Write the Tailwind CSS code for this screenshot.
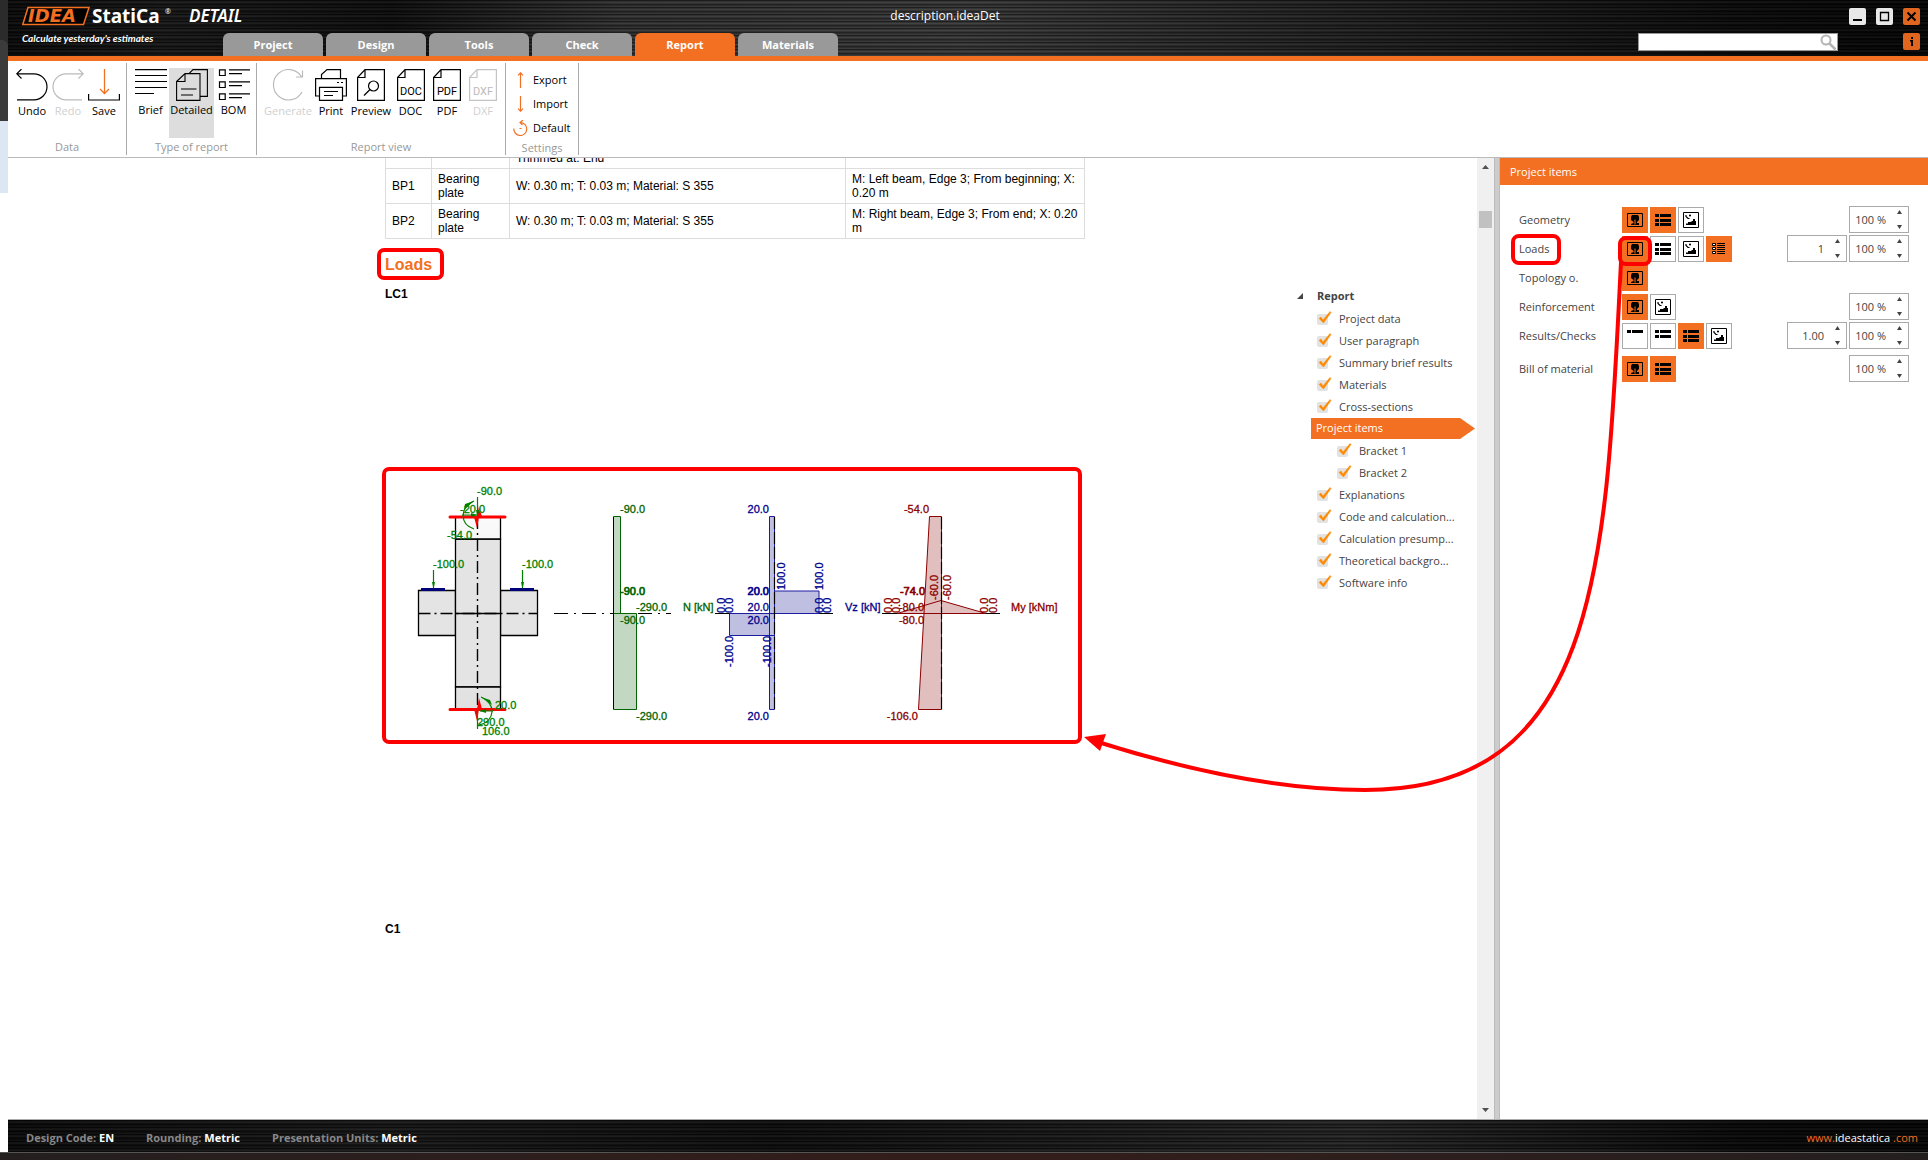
<!DOCTYPE html>
<html lang="en">
<head>
    <meta charset="UTF-8">
    <meta name="viewport" content="width=device-width, initial-scale=1.0">
    <title>description.ideaDet</title>
    <script src="https://cdn.jsdelivr.net/npm/@tailwindcss/browser@4"></script>
</head>
<body class="relative flex h-screen flex-col overflow-hidden bg-white font-['Open_Sans','Noto_Sans',sans-serif] text-[11px] leading-4 text-[#444]">

    <!-- icon sprites -->
    <svg class="hidden">
        <symbol id="i-figure" viewBox="0 0 16 16">
            <path d="M.5 1.500h15v13H.5z" fill="none" stroke="#000"/>
            <path d="M5 3h6l1 2v3l-2 2v1h2v2H4v-1l2.500-1v-1L4 8V5z" fill="#000"/>
            <path d="M7.500 7.500h1v5h-1z" fill="#f36f21"/>
        </symbol>
        <symbol id="i-list" viewBox="0 0 16 16">
            <path d="M0 2h4v3H0zM5 2h11v3H5zM0 7h4v3H0zM5 7h11v3H5zM0 11h4v3H0zM5 11h11v3H5z" fill="#000"/>
        </symbol>
        <symbol id="i-list2" viewBox="0 0 16 16">
            <path d="M0 2h4v3H0zM5 2h11v3H5zM0 7h4v3H0zM5 7h11v3H5z" fill="#000"/>
        </symbol>
        <symbol id="i-list1" viewBox="0 0 16 16">
            <path d="M0 2h4v3H0zM5 2h11v3H5z" fill="#000"/>
        </symbol>
        <symbol id="i-details" viewBox="0 0 16 16">
            <path d="M1.500 2.500h3v2h-3zM1.500 6.500h3v2h-3zM1.500 10.500h3v2h-3z" fill="#fff" stroke="#000"/>
            <path d="M6 2.500h8M6 4.500h8M6 6.500h8M6 8.500h8M6 10.500h8M6 12.500h8" stroke="#000"/>
        </symbol>
        <symbol id="i-image" viewBox="0 0 16 16">
            <path d="M.5.500h15v15H.5z" fill="#fff" stroke="#000"/>
            <path d="M3 3v1.500L5 6.500h1.500M7 2.500v2M6 3.500h2" stroke="#000" stroke-width="1.200" fill="none"/>
            <path d="M3 13v-1.500h2V10h3l1-1h1V7h2v2h1v4z" fill="#000"/>
        </symbol>
        <symbol id="i-check" viewBox="0 0 14 13">
            <path d="M1 7.500 3 6l2 3L12 .5l1 1L5.500 12z" fill="#ff8a00" stroke="#ff8a00" stroke-width=".5"/>
        </symbol>
    </svg>

    <div class="flex min-h-0 flex-1">
        <!-- edge of the window behind -->
        <div class="w-2 shrink-0">
            <div class="h-[121px] bg-[#2b2b2b] pt-10">
                <div class="h-[81px] rounded-tr-md bg-[#3b3b3b]"></div>
            </div>
            <div class="h-[72px] bg-[#dde6f3]"></div>
        </div>

        <div class="flex min-w-0 flex-1 flex-col">
            <header class="h-[61px] shrink-0 border-b-5 border-[#f36f21] bg-[repeating-linear-gradient(180deg,rgba(0,0,0,.55)_0px,rgba(0,0,0,.55)_1px,rgba(90,90,90,.25)_2px,rgba(0,0,0,.1)_3px,rgba(0,0,0,.6)_5px,rgba(60,60,60,.2)_6px,rgba(0,0,0,.2)_7px),linear-gradient(90deg,#0c0c0c_0%,#1c1c1c_8%,#101010_20%,#3c3c3c_32%,#444_50%,#2e2e2e_65%,#0c0c0c_90%,#050505_100%)] text-white">
                <div class="flex h-[33px]">
                    <div class="flex w-[215px] pl-3.5">
                        <svg class="h-8 w-[230px] shrink-0" viewBox="0 0 230 32">
                            <path d="M6 7.500H67L61.500 24.500H.800z" fill="#000" stroke="#f36f21" stroke-width="1.500"/>
                            <text x="6" y="22" font-family="DejaVu Sans" font-style="italic" font-weight="700" font-size="18" fill="#f36f21">IDEA</text>
                            <text x="70" y="23" font-family="Noto Sans" font-weight="700" font-size="19" fill="#fff">StatiCa</text>
                            <text x="143" y="14" font-family="Noto Sans" font-size="7" fill="#fff">®</text>
                            <text x="167" y="22" font-family="Noto Sans" font-style="italic" font-weight="600" font-size="17" fill="#fff">DETAIL</text>
                        </svg>
                    </div>
                    <div class="flex-1 pt-2 text-center text-xs">description.ideaDet</div>
                    <div class="flex w-[261px] justify-end gap-2.5 pt-2 pr-2">
                        <button class="size-[17px] rounded-xs bg-[#e8e8e8]" aria-label="Minimize"><svg viewBox="0 0 17 17"><path d="M4 12h9" stroke="#000" stroke-width="2"/></svg></button>
                        <button class="size-[17px] rounded-xs bg-[#e8e8e8]" aria-label="Maximize"><svg viewBox="0 0 17 17"><path d="M4.500 4.500h8v8h-8z" fill="none" stroke="#000" stroke-width="1.300"/></svg></button>
                        <button class="size-[17px] rounded-xs bg-[#e0661f]" aria-label="Close"><svg viewBox="0 0 17 17"><path d="m4.500 4.500 8 8m0-8-8 8" stroke="#000" stroke-width="2"/></svg></button>
                    </div>
                </div>
                <div class="flex h-[23px] items-start">
                    <div class="w-[215px] pl-3.5 font-['Lato',sans-serif] text-[10px] leading-[11px] font-bold italic">Calculate yesterday's estimates</div>
                    <nav class="flex gap-[3px] text-[11px] font-bold">
                        <button class="h-[23px] w-[100px] rounded-t-md bg-[#999]">Project</button>
                        <button class="h-[23px] w-[100px] rounded-t-md bg-[#999]">Design</button>
                        <button class="h-[23px] w-[100px] rounded-t-md bg-[#999]">Tools</button>
                        <button class="h-[23px] w-[100px] rounded-t-md bg-[#999]">Check</button>
                        <button class="h-[23px] w-[100px] rounded-t-md bg-[#f36f21]">Report</button>
                        <button class="h-[23px] w-[100px] rounded-t-md bg-[#999]">Materials</button>
                    </nav>
                    <div class="mr-[65px] ml-auto flex h-[18px] w-[200px] border border-[#999] bg-white">
                        <input type="search" aria-label="Search" class="min-w-0 flex-1 px-1 text-black outline-none">
                        <svg class="size-[17px]" viewBox="0 0 17 17" fill="none" stroke="#b5b5b5" stroke-width="2"><circle cx="6" cy="6" r="4.500"/><path d="m9.500 9.500 6 6" stroke-width="2.500"/></svg>
                    </div>
                    <button class="mr-2 size-[17px] rounded-xs bg-[#e0661f]" aria-label="Info"><svg viewBox="0 0 17 17"><path d="M8 4h2v2H8zM8 7h2v6H8zM7 7h2v1.500H7z"/></svg></button>
                </div>
            </header>

            <!-- ribbon -->
            <div class="flex h-[97px] shrink-0 border-b border-[#bbb] pt-0.5 pb-0.5 text-black">
                <section class="flex w-[119px] flex-col border-r border-[#aaa] pt-[5px]">
                    <div class="flex flex-1 items-start pl-1.5">
                        <button class="flex w-9 flex-col items-center gap-0.5 pt-px whitespace-nowrap">
                            <svg class="size-8" viewBox="0 0 32 32" fill="none" stroke="#000" stroke-width="1.200"><path d="M5.500 0 .8 4.800l4.700 4.700M1 4.800h17a13 13 0 0 1 0 26H1"/></svg>
                            Undo
                        </button>
                        <button class="flex w-9 flex-col items-center gap-0.5 pt-px whitespace-nowrap text-[#d0d0d0]">
                            <svg class="size-8" viewBox="0 0 32 32" fill="none" stroke="#bbb" stroke-width="1.200"><path d="m26.500 0 4.700 4.800-4.700 4.700M31 4.800H14a13 13 0 0 0 0 26h16"/></svg>
                            Redo
                        </button>
                        <button class="flex w-9 flex-col items-center gap-0.5 pt-px whitespace-nowrap">
                            <svg class="size-8" viewBox="0 0 32 32" fill="none" stroke="#000"><path d="M.6 25v6h30.800v-6" stroke-width="1.200"/><path d="M16.500 0v24M12 20l4.500 4.500L21 20" stroke="#f36f21" stroke-width="1.300"/></svg>
                            Save
                        </button>
                    </div>
                    <div class="h-4 text-center text-[#999]">Data</div>
                </section>
                <section class="flex w-[130px] flex-col border-r border-[#aaa] pt-[5px]">
                    <div class="flex flex-1 items-start pl-[5px]">
                        <button class="flex w-[37px] flex-col items-center gap-px pt-px whitespace-nowrap">
                            <svg class="size-8" viewBox="0 0 32 32" stroke="#000" stroke-width="1.200"><path d="M0 .6h32M0 6.500h32M0 12.500h32M0 18.500h32M0 24.500h19"/></svg>
                            Brief
                        </button>
                        <button class="flex h-[70px] w-[45px] flex-col items-center gap-px bg-[#ddd] pt-px whitespace-nowrap">
                            <svg class="size-8" viewBox="0 0 32 32" fill="none" stroke="#000" stroke-width="1.100"><path d="M.6 12.500 9 4.600h15v26.800H.6zM.6 12.500H9V4.600M13 4.600 17 .6h14.400v26.800H24M5 20h15.500M5 26h12"/></svg>
                            Detailed
                        </button>
                        <button class="flex w-[39px] flex-col items-center gap-px pt-px whitespace-nowrap">
                            <svg class="size-8" viewBox="0 0 32 32" fill="none" stroke="#000" stroke-width="1.200"><path d="M1.500.800h5.700v5.700H1.500zM1.500 12.800h5.700v5.700H1.500zM1.500 24.800h5.700v5.700H1.500zM11 .8h21M11 4.700h13M11 12.800h21M11 16.700h13M11 24.800h21M11 28.700h13"/></svg>
                            BOM
                        </button>
                    </div>
                    <div class="h-4 text-center text-[#999]">Type of report</div>
                </section>
                <section class="flex w-[249px] flex-col border-r border-[#aaa] pt-[5px]">
                    <div class="flex flex-1 items-start pl-[7px]">
                        <button class="flex w-12 flex-col items-center gap-0.5 pt-px whitespace-nowrap text-[#d0d0d0]">
                            <svg class="size-8" viewBox="0 0 32 32" fill="none" stroke="#bbb" stroke-width="1.200"><path d="M30 23A15.200 15.200 0 1 1 30 8.500M30.500 1.500V8H24"/></svg>
                            Generate
                        </button>
                        <button class="flex w-[38px] flex-col items-center gap-0.5 pt-px whitespace-nowrap">
                            <svg class="size-8" viewBox="0 0 32 32" fill="none" stroke="#000" stroke-width="1.200"><path d="M6.500 9V5.500L12 .6h13.500V9M4 27H.6V9.600h30.800V27H28M22 13.500h2M26 13.500h2"/><path d="M4.500 31.400v-13h23v13zM9 22.500h14M9 26.500h9"/></svg>
                            Print
                        </button>
                        <button class="flex w-[42px] flex-col items-center gap-0.5 pt-px whitespace-nowrap">
                            <svg class="size-8" viewBox="0 0 32 32" fill="none" stroke="#000" stroke-width="1.200"><path d="M2.600 8.500 10 .6h19.400v30.800H2.600zM2.600 8.500H10V.6"/><circle cx="18.500" cy="17" r="5"/><path d="m15 20.500-6 6"/></svg>
                            Preview
                        </button>
                        <button class="flex w-[37px] flex-col items-center gap-0.5 pt-px whitespace-nowrap">
                            <svg class="size-8" viewBox="0 0 32 32" fill="none" stroke="#000" stroke-width="1.200"><path d="M2.600 8.500 10 .6h19.400v30.800H2.600zM2.600 8.500H10V.6"/><text x="16" y="26" text-anchor="middle" font-family="Roboto" font-size="11" fill="#000" stroke="none">DOC</text></svg>
                            DOC
                        </button>
                        <button class="flex w-9 flex-col items-center gap-0.5 pt-px whitespace-nowrap">
                            <svg class="size-8" viewBox="0 0 32 32" fill="none" stroke="#000" stroke-width="1.200"><path d="M2.600 8.500 10 .6h19.400v30.800H2.600zM2.600 8.500H10V.6"/><text x="16" y="26" text-anchor="middle" font-family="Roboto" font-size="11" fill="#000" stroke="none">PDF</text></svg>
                            PDF
                        </button>
                        <button class="flex w-9 flex-col items-center gap-0.5 pt-px whitespace-nowrap text-[#d0d0d0]">
                            <svg class="size-8" viewBox="0 0 32 32" fill="none" stroke="#c4c4c4" stroke-width="1.200"><path d="M2.600 8.500 10 .6h19.400v30.800H2.600zM2.600 8.500H10V.6"/><text x="16" y="26" text-anchor="middle" font-family="Roboto" font-size="11" fill="#bbb" stroke="none">DXF</text></svg>
                            DXF
                        </button>
                    </div>
                    <div class="h-4 text-center text-[#999]">Report view</div>
                </section>
                <section class="flex w-[73px] flex-col border-r border-[#aaa] pt-[5px]">
                    <div class="flex flex-1 flex-col pl-[7px]">
                        <button class="flex h-6 items-center gap-1">
                            <svg class="size-4" viewBox="0 0 16 16" fill="none" stroke="#f36f21" stroke-width="1.200"><path d="M7.500 16V.8M5 3.300 7.500.800 10 3.300"/></svg>
                            Export
                        </button>
                        <button class="flex h-6 items-center gap-1">
                            <svg class="size-4" viewBox="0 0 16 16" fill="none" stroke="#f36f21" stroke-width="1.200"><path d="M7.500 0v15.200M5 12.700l2.500 2.500 2.500-2.500"/></svg>
                            Import
                        </button>
                        <button class="flex h-6 items-center gap-1">
                            <svg class="size-4" viewBox="0 0 16 16" fill="none" stroke="#f36f21" stroke-width="1.200"><path d="M.8 8.500A6.500 6.500 0 1 0 7.500 2.500M10 0 7 2.500 9.500 5M6.500 8.500h2"/></svg>
                            Default
                        </button>
                    </div>
                    <div class="h-4 text-center text-[#999]">Settings</div>
                </section>
            </div>

            <main class="flex min-h-0 flex-1">
                <!-- report document -->
                <article class="min-w-0 flex-1 overflow-hidden pl-[377px] font-['Liberation_Sans',sans-serif] text-xs leading-[14px] text-black">
                    <table class="-mt-[25px] w-[700px] table-fixed border-collapse">
                        <colgroup><col class="w-[46px]"><col class="w-[78px]"><col class="w-[336px]"><col></colgroup>
                        <tbody>
                            <tr class="h-[35px]">
                                <td class="border border-[#ddd]"></td>
                                <td class="border border-[#ddd]"></td>
                                <td class="border border-[#ddd] px-1.5 pb-[3px] align-bottom">Trimmed at: End</td>
                                <td class="border border-[#ddd]"></td>
                            </tr>
                            <tr class="h-[35px]">
                                <td class="border border-[#ddd] px-1.5">BP1</td>
                                <td class="border border-[#ddd] px-1.5">Bearing<br>plate</td>
                                <td class="border border-[#ddd] px-1.5">W: 0.30 m; T: 0.03 m; Material: S 355</td>
                                <td class="border border-[#ddd] px-1.5">M: Left beam, Edge 3; From beginning; X: 0.20 m</td>
                            </tr>
                            <tr class="h-[35px]">
                                <td class="border border-[#ddd] px-1.5">BP2</td>
                                <td class="border border-[#ddd] px-1.5">Bearing<br>plate</td>
                                <td class="border border-[#ddd] px-1.5">W: 0.30 m; T: 0.03 m; Material: S 355</td>
                                <td class="border border-[#ddd] px-1.5">M: Right beam, Edge 3; From end; X: 0.20<br>m</td>
                            </tr>
                        </tbody>
                    </table>
                    <h2 class="mt-4 text-base leading-5 font-bold text-[#f36f21]">Loads</h2>
                    <h3 class="mt-3 font-bold">LC1</h3>

                    <!-- load scheme and N / Vz / My diagrams -->
                    <svg class="mt-[166px] h-[277px] w-[700px] overflow-visible" viewBox="385 467 700 277" font-family="Liberation Sans" font-size="11">
                        <defs>
                            <linearGradient id="top" x2="0" y2="1"><stop stop-color="#fafafa"/><stop offset="1" stop-color="#e0e0e0"/></linearGradient>
                        </defs>
                        <g fill="#e4e4e4" stroke="#000" stroke-width="1.300">
                            <path d="M418.500 590.500h37v45h-37zM500.500 590.500h37v45h-37z"/>
                            <path d="M455.500 539h45v148h-45z"/>
                            <path d="M455.500 517h45v22h-45zM455.500 687h45v22h-45z" fill="url(#top)"/>
                            <path d="M455.500 613.500h45"/>
                        </g>
                        <path d="M418.500 613.500h119M477.500 517v192" stroke="#000" stroke-width="1.400" stroke-dasharray="12 4 2 4" fill="none"/>
                        <path d="M421 588h24v3h-24zM510 588h24v3h-24z" fill="#000078"/>
                        <path d="M450 517h55M450 709.500h55" stroke="#f00" stroke-width="3" stroke-linecap="round"/>
                        <path d="m479 506 3 11h-3l-2 11-3-11h3zM479 698l3 11h-3l-2 12-3-12h3z" fill="#f00"/>
                        <g fill="none" stroke="#008000" stroke-width="1.200">
                            <path d="M477.500 497v20M433.500 570v18M522.500 570v18M477.500 709v20M462 515h15M480 711h13"/>
                            <path d="M474 501c-14 6-15 23 0 28M481 697c15 6 15 24-2 28"/>
                        </g>
                        <path d="m474 501-9 3-1 6zM481 697l9 3 2 5zM432 582h3l-1.500 7zM521 582h3l-1.500 7zM471 513l6 2-6 2zM476 510h3l-1.500 7zM486 709l-6 2 6 2z" fill="#008000"/>
                        <g fill="#008000" stroke="#008000" stroke-width=".3">
                            <text x="477" y="495">-90.0</text>
                            <text x="460" y="513">-20.0</text>
                            <text x="447" y="539">-54.0</text>
                            <text x="433" y="568">-100.0</text>
                            <text x="522" y="568">-100.0</text>
                            <text x="495" y="709">20.0</text>
                            <text x="477" y="726">290.0</text>
                            <text x="482" y="735">106.0</text>
                        </g>

                        <!-- N -->
                        <path d="M554 613.500h117" stroke="#000" stroke-dasharray="14 6 2 6"/>
                        <path d="M613.500 516.500h7v97h-7zM613.500 613.500h23v96h-23z" fill="#c3d8c3" stroke="#006400"/>
                        <path d="M613.500 517v192" stroke="#000"/>
                        <g fill="#006400" stroke="#006400" stroke-width=".3">
                            <text x="620" y="513">-90.0</text>
                            <text x="620" y="595" stroke-width=".7">-90.0</text>
                            <text x="636" y="611">-290.0</text>
                            <text x="620" y="624">-90.0</text>
                            <text x="636" y="720">-290.0</text>
                            <text x="683" y="611">N [kN]</text>
                        </g>

                        <!-- Vz -->
                        <path d="M715 613.500h118" stroke="#000" stroke-width="1.200"/>
                        <path d="M729.500 613.500h45v22h-45zM774.500 591h44.500v22.500h-44.500zM769.500 516.500h5v193h-5z" fill="#00008b" fill-opacity=".25" stroke="#1c1ca0"/>
                        <path d="M774.500 517v192" stroke="#000" stroke-width="1.200" stroke-dasharray="12 3"/>
                        <g fill="#00008b" stroke="#00008b" stroke-width=".3">
                            <g text-anchor="end">
                                <text x="769" y="513">20.0</text>
                                <text x="769" y="595" stroke-width=".7">20.0</text>
                                <text x="769" y="611">20.0</text>
                                <text x="769" y="624">20.0</text>
                                <text x="769" y="720">20.0</text>
                            </g>
                            <text transform="translate(785 590) rotate(-90)">100.0</text>
                            <text transform="translate(823 590) rotate(-90)">100.0</text>
                            <text transform="translate(725 613) rotate(-90)">0.0</text>
                            <text transform="translate(733 613) rotate(-90)">0.0</text>
                            <text transform="translate(823 613) rotate(-90)">0.0</text>
                            <text transform="translate(831 613) rotate(-90)">0.0</text>
                            <text transform="translate(733 667) rotate(-90)">-100.0</text>
                            <text transform="translate(771 667) rotate(-90)">-100.0</text>
                            <text x="845" y="611">Vz [kN]</text>
                        </g>

                        <!-- My -->
                        <path d="M882 613.500h118" stroke="#000" stroke-width="1.200"/>
                        <path d="M929.500 516.500h12v193H918.500zM897 613.500l44-13 45 13z" fill="#8b0000" fill-opacity=".25" stroke="#8b0000"/>
                        <path d="M941.500 517v192" stroke="#000" stroke-width="1.200" stroke-dasharray="12 3"/>
                        <g fill="#8b0000" stroke="#8b0000" stroke-width=".3">
                            <g text-anchor="end">
                                <text x="929" y="513">-54.0</text>
                                <text x="925" y="595" stroke-width=".7">-74.0</text>
                                <text x="924" y="611">-80.0</text>
                                <text x="924" y="624">-80.0</text>
                                <text x="918" y="720">-106.0</text>
                            </g>
                            <text transform="translate(938 600) rotate(-90)">-60.0</text>
                            <text transform="translate(951 600) rotate(-90)">-60.0</text>
                            <text transform="translate(892 613) rotate(-90)">0.0</text>
                            <text transform="translate(900 613) rotate(-90)">0.0</text>
                            <text transform="translate(988 613) rotate(-90)">0.0</text>
                            <text transform="translate(997 613) rotate(-90)">0.0</text>
                            <text x="1011" y="611">My [kNm]</text>
                        </g>
                    </svg>
                    <h3 class="mt-[178px] font-bold">C1</h3>
                </article>

                <!-- report tree -->
                <aside class="w-[180px] shrink-0 pt-[126px]">
                    <div class="flex h-6 items-center gap-3.5 font-bold"><svg class="size-1.5" viewBox="0 0 6 6"><path d="M6 0v6H0z" fill="#444"/></svg>Report</div>
                    <ul id="treeTop"></ul>
                    <div class="mb-px ml-3.5 flex h-[21px] w-[164px] items-center bg-[#f36f21] pb-px pl-[5px] text-white [clip-path:polygon(0_0,149px_0,164px_50%,149px_100%,0_100%)]">Project items</div>
                    <ul id="treeBrackets" class="pl-5"></ul>
                    <ul id="treeBottom"></ul>
                </aside>

                <!-- scrollbar -->
                <div class="flex w-[17px] shrink-0 flex-col items-center bg-[#f0f0f0]">
                    <svg class="mt-[7px] h-1 w-[7px]" viewBox="0 0 7 4"><path d="M0 4 3.500 0 7 4z" fill="#505050"/></svg>
                    <div class="mt-[42px] h-[17px] w-[13px] bg-[#c1c1c1]"></div>
                    <svg class="mt-auto mb-[7px] h-1 w-[7px]" viewBox="0 0 7 4"><path d="M0 0h7L3.500 4z" fill="#505050"/></svg>
                </div>
                <div class="w-1.5 shrink-0 border-x border-[#bbb] bg-[#ccc]"></div>

                <!-- project items panel -->
                <aside class="w-[428px] shrink-0">
                    <h2 class="h-[27px] bg-[#f36f21] pl-2.5 leading-7 text-white">Project items</h2>
                    <div id="itemRows" class="pt-5 pr-[19px] pl-[19px]"></div>
                </aside>
            </main>

            <footer class="flex h-[33px] shrink-0 items-center border-t border-[#aaa] bg-[repeating-linear-gradient(180deg,rgba(0,0,0,.55)_0px,rgba(0,0,0,.55)_1px,rgba(90,90,90,.25)_2px,rgba(0,0,0,.1)_3px,rgba(0,0,0,.6)_5px,rgba(60,60,60,.2)_6px,rgba(0,0,0,.2)_7px),linear-gradient(90deg,#0c0c0c_0%,#1c1c1c_20%,#101010_40%,#2c2c2c_70%,#0a0a0a_90%,#050505_100%)] pt-[3px] pr-2.5 pl-[18px] font-bold text-[#888]">
                <div class="w-[120px]">Design Code: <span class="text-white">EN</span></div>
                <div class="w-[126px]">Rounding: <span class="text-white">Metric</span></div>
                <div>Presentation Units: <span class="text-white">Metric</span></div>
                <a href="#" class="ml-auto font-normal text-[#f36f21]">www.<span class="text-white">ideastatica</span> .com</a>
            </footer>
        </div>
    </div>
    <div class="h-2 shrink-0 border-t border-[#555] bg-linear-to-r from-[#241f1f] via-[#331d1a] to-[#241f1f]"></div>

    <!-- callouts -->
    <svg class="pointer-events-none absolute top-0 left-0 h-[1160px] w-[1928px]" viewBox="0 0 1928 1160" fill="none" stroke="#f00" stroke-width="4">
        <rect x="379" y="250" width="63" height="28" rx="5"/>
        <rect x="384" y="469" width="696" height="273" rx="5"/>
        <rect x="1513" y="236" width="46" height="27" rx="6"/>
        <rect x="1620" y="238" width="30" height="26" rx="6"/>
        <path d="M1621 262C1606 560 1602 790 1365 790 1280 790 1190 771 1098 742"/>
        <path d="m1084 737 22-3-6 17z" fill="#f00" stroke="none"/>
    </svg>

    <script>
        const treeItem = (name) => `
            <li class="flex h-[22px] items-center">
                <label class="relative flex items-center gap-[11px] pl-5">
                    <input type="checkbox" checked class="size-[11px] appearance-none rounded-xs bg-[#e2e2e2]">
                    <svg class="absolute top-0 left-[21px] h-[13px] w-3.5"><use href="#i-check"/></svg>
                    ${name}
                </label>
            </li>`;
        const fill = (id, names) => {
            document.getElementById(id).innerHTML = names.map(treeItem).join('');
        };
        fill('treeTop', ['Project data', 'User paragraph', 'Summary brief results', 'Materials', 'Cross-sections']);
        fill('treeBrackets', ['Bracket 1', 'Bracket 2']);
        fill('treeBottom', ['Explanations', 'Code and calculation...', 'Calculation presump...', 'Theoretical backgro...', 'Software info']);

        // icons: [sprite, active]
        const rows = [
            { name: 'Geometry', icons: [['figure', 1], ['list', 1], ['image', 0]], spins: ['100 %'] },
            { name: 'Loads', icons: [['figure', 1], ['list', 0], ['image', 0], ['details', 1]], spins: ['1', '100 %'] },
            { name: 'Topology o.', icons: [['figure', 1]], spins: [] },
            { name: 'Reinforcement', icons: [['figure', 1], ['image', 0]], spins: ['100 %'] },
            { name: 'Results/Checks', icons: [['list1', 0], ['list2', 0], ['list', 1], ['image', 0]], spins: ['1.00', '100 %'] },
            { name: 'Bill of material', icons: [['figure', 1], ['list', 1]], spins: ['100 %'] },
        ];
        document.getElementById('itemRows').innerHTML = rows.map(row => `
            <div class="flex h-[29px] items-center gap-0.5 last:mt-1">
                <span class="w-[101px]">${row.name}</span>
                ${row.icons.map(([icon, on]) => `
                    <button aria-label="${icon}" class="flex size-[26px] items-center justify-center border ${on ? 'border-[#f36f21] bg-[#f36f21]' : 'border-[#aaa] bg-white'}">
                        <svg class="size-4"><use href="#i-${icon}"/></svg>
                    </button>`).join('')}
                <div class="ml-auto flex gap-0.5">
                    ${row.spins.map(value => `
                        <div class="flex h-[27px] w-[60px] items-center border border-[#aaa]">
                            <input type="text" aria-label="${row.name}" value="${value}" class="w-9 text-right outline-none">
                            <svg class="ml-auto mr-1.5 h-[19px] w-[5px]" viewBox="0 0 5 19"><path d="M0 4 2.500 0 5 4zM0 15h5l-2.500 4z" fill="#444"/></svg>
                        </div>`).join('')}
                </div>
            </div>`).join('');
    </script>
</body>
</html>
